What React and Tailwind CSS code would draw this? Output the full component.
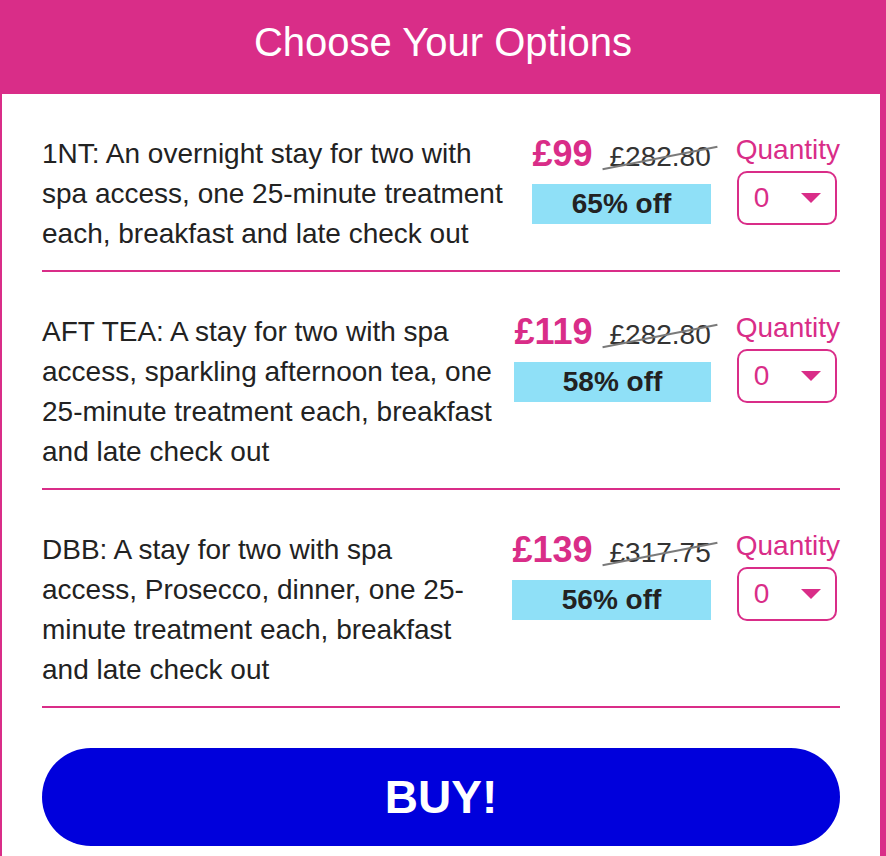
import React from 'react';

const options = [
  {
    id: '1nt',
    text: '1NT: An overnight stay for two with spa access, one 25-minute treatment each, breakfast and late check out',
    price: '£99',
    was: '£282.80',
    off: '65% off',
  },
  {
    id: 'afttea',
    text: 'AFT TEA: A stay for two with spa access, sparkling afternoon tea, one 25-minute treatment each, breakfast and late check out',
    price: '£119',
    was: '£282.80',
    off: '58% off',
  },
  {
    id: 'dbb',
    text: 'DBB: A stay for two with spa access, Prosecco, dinner, one 25-minute treatment each, breakfast and late check out',
    price: '£139',
    was: '£317.75',
    off: '56% off',
  },
];

const OptionRow = ({ option }) => (
  <div className="flex items-start border-b-2 border-[#d92d88] pt-10 pb-4">
    <p className="mr-5 min-w-0 flex-1 text-[28px] leading-[40px] text-[#222]">{option.text}</p>

    <div className="mr-[25px] flex shrink-0 flex-col">
      <div className="flex items-baseline gap-[17px]">
        <span className="text-[36px] font-bold leading-[40px] text-[#d92d88]">{option.price}</span>
        <span className="relative text-[28px] leading-[40px] text-[#333]">
          {option.was}
          <span className="absolute left-1/2 top-[52%] h-[2px] w-[117px] -translate-x-1/2 -translate-y-1/2 -rotate-[11deg] bg-[#7a7a7a]" />
        </span>
      </div>
      <div className="mt-[7px] flex h-10 items-center justify-center bg-[#8fe0f7] text-[28px] font-bold text-[#222]">
        {option.off}
      </div>
    </div>

    <div className="flex shrink-0 flex-col items-start">
      <span className="text-[28px] leading-[32px] text-[#d92d88]">Quantity</span>
      <div className="ml-px mt-[5px] flex h-[54px] w-[100px] items-center justify-between rounded-[10px] border-2 border-[#d92d88] pl-[15px] pr-[14px] text-[28px] text-[#d92d88]">
        <span>0</span>
        <svg width="20" height="10" viewBox="0 0 20 10">
          <path d="M0 0 H20 L10 10 Z" fill="#d92d88" />
        </svg>
      </div>
    </div>
  </div>
);

export default function App() {
  return (
    <div className="w-[886px] bg-white" style={{ fontFamily: '"Liberation Sans", Arial, sans-serif' }}>
      <div className="h-[94px] bg-[#d92d88] pt-[22px] text-center text-[40px] leading-[40px] text-white">
        Choose Your Options
      </div>
      <div className="border-l-2 border-r-[6px] border-[#d92d88] px-10 pb-10">
        {options.map((o) => (
          <OptionRow key={o.id} option={o} />
        ))}
        <button className="mt-10 flex h-[98px] w-full items-center justify-center rounded-full bg-[#0000dc] text-[46px] font-bold text-white">
          BUY!
        </button>
      </div>
    </div>
  );
}
